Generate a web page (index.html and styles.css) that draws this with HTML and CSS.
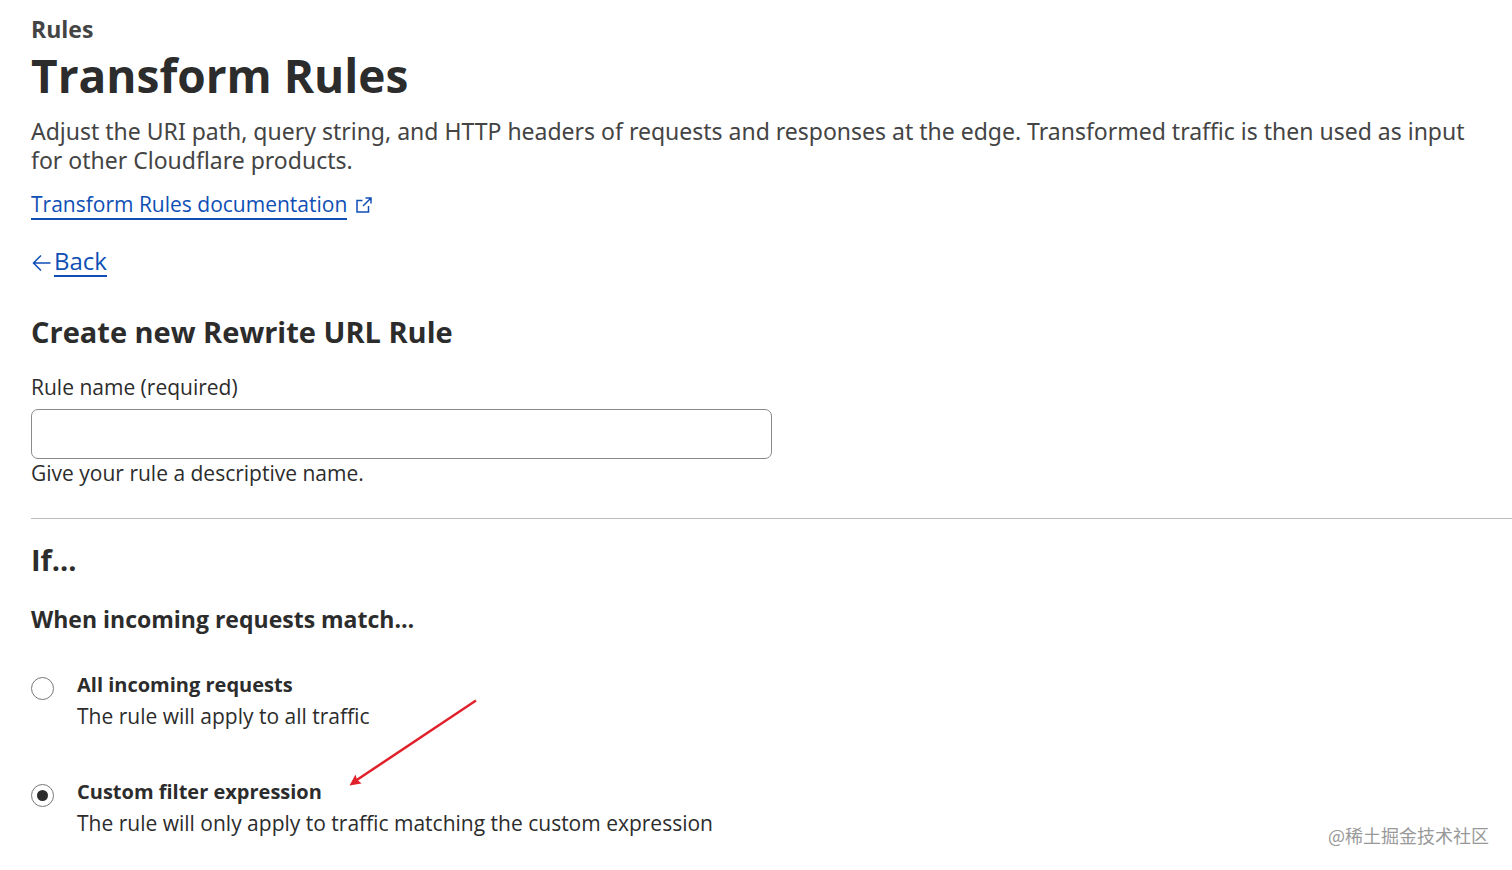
FILE: index.html
```html
<!DOCTYPE html>
<html lang="en">
<head>
    <meta charset="UTF-8">
    <meta name="viewport" content="width=device-width, initial-scale=1.0">
    <title>Transform Rules</title>
    <link rel="stylesheet" href="styles.css">
</head>
<body>
    <header class="page-header">
        <p class="section-name">Rules</p>
        <h1>Transform Rules</h1>
        <p class="description">Adjust the URI path, query string, and HTTP headers of requests and responses at the edge. Transformed traffic is then used as input for other Cloudflare products.</p>
        <a class="doc-link" href="#">
            <span class="link-text">Transform Rules documentation</span>
            <svg class="external-icon" viewBox="0 0 32 32" aria-hidden="true">
                <path d="M13 7H2v23h23V18M19 2h11v11M30 2L14 18" />
            </svg>
        </a>
    </header>

    <a class="back-link" href="#">
        <svg class="back-icon" viewBox="0 0 40 36" aria-hidden="true">
            <path d="M39 20H5M20 5L5 20l15 15" />
        </svg>
        <span class="link-text">Back</span>
    </a>

    <form class="rule-form">
        <h2>Create new Rewrite URL Rule</h2>

        <div class="field">
            <label for="rule-name">Rule name (required)</label>
            <input type="text" id="rule-name" class="text-input" aria-describedby="rule-name-help" required>
            <p id="rule-name-help" class="help">Give your rule a descriptive name.</p>
        </div>

        <hr>

        <h2>If...</h2>
        <h3 id="match-title">When incoming requests match…</h3>

        <div class="options" role="radiogroup" aria-labelledby="match-title">
            <label class="option">
                <input type="radio" name="match" value="all">
                <span class="option-text">
                    <strong>All incoming requests</strong>
                    <span>The rule will apply to all traffic</span>
                </span>
            </label>

            <label class="option">
                <input type="radio" name="match" value="custom" checked>
                <span class="option-text">
                    <strong>Custom filter expression</strong>
                    <span>The rule will only apply to traffic matching the custom expression</span>
                </span>
            </label>

            <!-- Red arrow pointing at the custom filter option -->
            <svg class="arrow" viewBox="0 0 256 176" aria-hidden="true">
                <path class="arrow-line" d="M254 3L14 163" />
                <path class="arrow-head" d="M1 173L13 151L16 161L25 169Z" />
            </svg>
        </div>
    </form>

    <p class="watermark">@稀土掘金技术社区</p>
</body>
</html>
```

FILE: styles.css
```css
* {
    box-sizing: border-box;
}

body {
    position: relative;
    margin: 0;
    padding: 14px 0 30px 31px;
    background-color: #fff;
    color: #2c2c2c;
    font-family: "Segoe UI", "Open Sans", "Noto Sans CJK SC", sans-serif;
    font-size: 21px;
    line-height: 30px;
}

h1, h2, h3, p {
    margin: 0;
}

a {
    color: #0f4fb5;
    text-decoration: none;
}

.page-header {
    padding-right: 31px;
}

.section-name {
    color: #444;
    font-size: 23px;
    font-weight: bold;
}

h1 {
    font-size: 46px;
    line-height: 62px;
}

.description {
    margin-top: 11px;
    color: #444;
    font-family: "Segoe UI", "Noto Sans", sans-serif;
    font-size: 23px;
    line-height: 29px;
}

.doc-link {
    display: flex;
    align-items: center;
    gap: 9px;
    margin-top: 15px;
}

.link-text {
    border-bottom: 2px solid #0f4fb5;
    line-height: 28px;
}

.external-icon,
.back-icon {
    fill: none;
    stroke: #0f4fb5;
    stroke-width: 3;
}

.external-icon {
    width: 16px;
    height: 16px;
}

.back-link {
    display: inline-flex;
    align-items: center;
    gap: 3px;
    margin-top: 27px;
    font-size: 24px;
}

.back-icon {
    width: 20px;
    height: 18px;
}

h2 {
    font-size: 29px;
    line-height: 40px;
}

.rule-form {
    margin-top: 34px;
}

.field {
    margin-top: 20px;
}

.field label {
    display: block;
}

.text-input {
    display: block;
    width: 50%;
    height: 50px;
    margin-top: 7px;
    padding: 0 14px;
    border: 1px solid #8a8a8a;
    border-radius: 7px;
    font: inherit;
}

.help {
    line-height: 28px;
}

hr {
    margin: 31px 0 21px;
    border: 0;
    border-top: 1px solid #bbb;
}

h3 {
    margin-top: 24px;
    font-size: 23px;
    line-height: 30px;
}

.options {
    position: relative;
    display: flex;
    flex-direction: column;
    align-items: flex-start;
    gap: 46px;
    margin-top: 36px;
}

.option {
    display: flex;
    gap: 23px;
}

.option-text {
    display: flex;
    flex-direction: column;
    gap: 1px;
}

.option strong {
    font-size: 20px;
}

.option input {
    display: grid;
    place-items: center;
    flex: none;
    width: 23px;
    height: 23px;
    margin: 7px 0 0;
    border: 1px solid #777;
    border-radius: 50%;
    appearance: none;
}

.option input:checked::before {
    width: 11px;
    height: 11px;
    border-radius: 50%;
    background-color: #2c2c2c;
    content: "";
}

.arrow {
    position: absolute;
    top: 29px;
    left: 318px;
    width: 128px;
    height: 88px;
}

.arrow-line {
    fill: none;
    stroke: #e0202a;
    stroke-width: 5;
}

.arrow-head {
    fill: #e0202a;
}

.watermark {
    position: absolute;
    right: 23px;
    bottom: 18px;
    color: #999;
    font-family: "Noto Sans CJK SC", sans-serif;
    font-size: 18px;
    line-height: 30px;
}
```
